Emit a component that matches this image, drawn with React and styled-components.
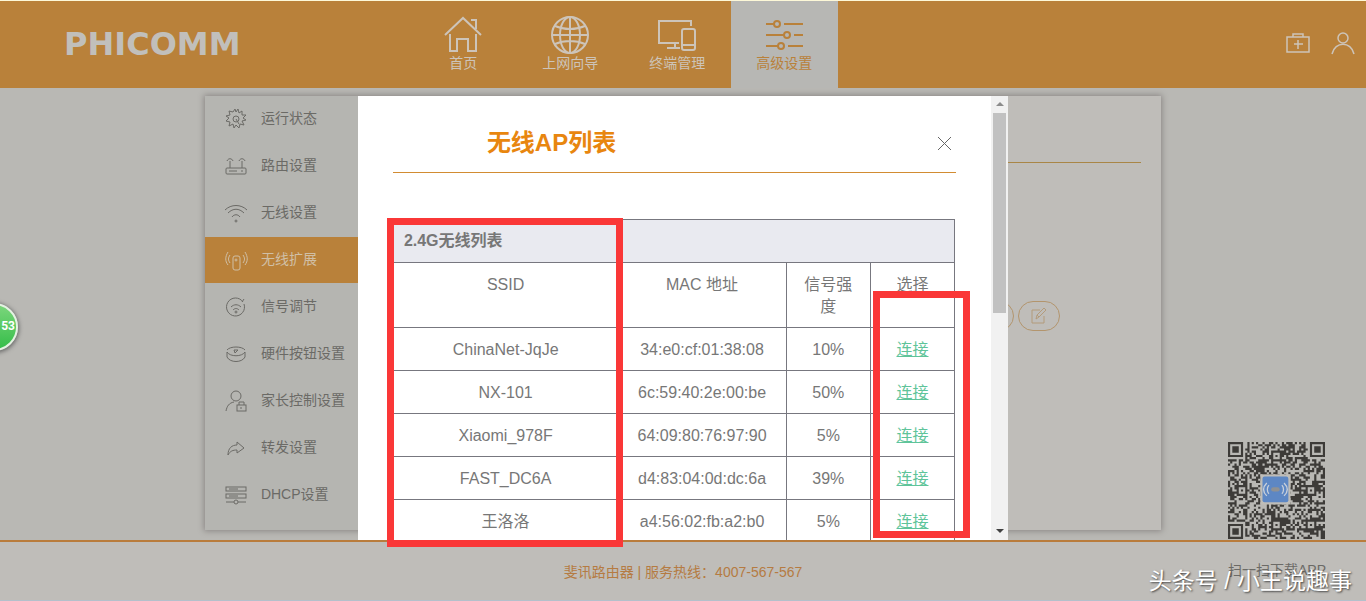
import styled, { createGlobalStyle } from "styled-components";

const menuItems = [
  { label: "运行状态", icon: "gear" },
  { label: "路由设置", icon: "router" },
  { label: "无线设置", icon: "wifi" },
  { label: "无线扩展", icon: "extender", active: true },
  { label: "信号调节", icon: "signal" },
  { label: "硬件按钮设置", icon: "button" },
  { label: "家长控制设置", icon: "parent" },
  { label: "转发设置", icon: "forward" },
  { label: "DHCP设置", icon: "dhcp" },
];

const accessPoints = [
  { ssid: "ChinaNet-JqJe", mac: "34:e0:cf:01:38:08", strength: "10%" },
  { ssid: "NX-101", mac: "6c:59:40:2e:00:be", strength: "50%" },
  { ssid: "Xiaomi_978F", mac: "64:09:80:76:97:90", strength: "5%" },
  { ssid: "FAST_DC6A", mac: "d4:83:04:0d:dc:6a", strength: "39%" },
  { ssid: "王洛洛", mac: "a4:56:02:fb:a2:b0", strength: "5%" },
];

const navItems = [
  {
    label: "首页",
    icon: <path d="M1 19 19 2l18 17M27 4h5v9M6 18v17h7V23h11v12h8V18" />,
  },
  {
    label: "上网向导",
    icon: (
      <>
        <circle cx="19" cy="19" r="18" />
        <ellipse cx="19" cy="19" rx="10" ry="18" />
        <path d="M19 1v36M1 19h36M4 10c9 4 21 4 30 0M4 28c9-4 21-4 30 0" />
      </>
    ),
  },
  {
    label: "终端管理",
    icon: (
      <>
        <path d="M33 10V5H1v22h20M17 27v4M9 32h13" />
        <rect x="24" y="13" width="13" height="21" rx="2" />
        <path d="M24 29h13" />
      </>
    ),
  },
  {
    label: "高级设置",
    active: true,
    icon: (
      <>
        <circle cx="12" cy="8" r="3" />
        <circle cx="22" cy="19" r="3" />
        <circle cx="16" cy="30" r="3" />
        <path d="M1 8h8M19 8h19M1 19h18M29 19h9M1 30h12M23 30h15" />
      </>
    ),
  },
];

const menuIcons = {
  gear: (
    <>
      <path d="m10 1 1 3 2-3 1 4 3-2v4h4l-3 3 3 2-4 1 2 4-4-1-1 4-3-3-2 3-1-4-4 2 1-4-4-1 3-3-3-2 4-1-1-4 4 1z" />
      <circle cx="11" cy="11" r="3" />
      <path d="m11 11 3 5" />
    </>
  ),
  router: (
    <>
      <rect x="1" y="13" width="20" height="6" rx="1" />
      <path d="M5 13V6M17 13V6M4 16h8M16 16h2M2 6c1-3 5-3 6 0M14 6c1-3 5-3 6 0" />
    </>
  ),
  wifi: (
    <>
      <path d="M0 8c6-6 16-6 22 0M3 11c5-5 11-5 16 0M7 15c2-3 6-3 8 0" />
      <circle cx="11" cy="19" r="1" />
    </>
  ),
  extender: (
    <>
      <rect x="8" y="7" width="7" height="14" rx="2" />
      <circle cx="11" cy="11" r="1" />
      <path d="M5 6c-2 3-2 5 0 8M3 3c-3 5-3 9 0 13M18 6c2 3 2 5 0 8M20 3c3 5 3 9 0 13" />
    </>
  ),
  signal: (
    <>
      <path d="M18 6a9 9 0 1 0 1 2M17 6l2-3M6 11c3-3 7-3 10 0M8 14c2-2 4-2 6 0" />
      <circle cx="11" cy="16" r="1" />
    </>
  ),
  button: (
    <path d="M2 7c3-4 15-4 18 0M2 9c3 5 15 5 18 0v5c-3 6-15 6-18 0zM9 7h4l-3 3z" />
  ),
  parent: (
    <>
      <circle cx="11" cy="6" r="5" />
      <path d="M1 21c1-5 3-8 8-9M14 15v-3h5v3" />
      <rect x="12" y="15" width="9" height="6" />
      <path d="M16 17v2" />
    </>
  ),
  forward: <path d="M3 18C3 11 7 8 12 8V5l7 6-7 5v-3c-4 0-7 1-9 5z" />,
  dhcp: (
    <>
      <rect x="1" y="3" width="20" height="4" />
      <rect x="1" y="10" width="20" height="4" />
      <path d="M4 5h9M4 12h9M1 18h8M13 18h8" />
      <circle cx="11" cy="18" r="2" />
    </>
  ),
};

const QR_SIZE = 45;
const FINDERS = [[0, 0], [38, 0], [0, 38]];
const ALIGNMENTS = [[22, 6], [6, 22], [38, 22], [22, 38], [38, 38]];

function ring(x, y, cx, cy) {
  return Math.max(Math.abs(x - cx), Math.abs(y - cy));
}

function buildQrPath() {
  let seed = 4007;
  let path = "";
  for (let y = 0; y < QR_SIZE; y++) {
    for (let x = 0; x < QR_SIZE; x++) {
      seed = (seed * 16807) % 2147483647;
      let dark = seed % 100 < 51;
      FINDERS.forEach(([fx, fy]) => {
        const d = ring(x, y, fx + 3, fy + 3);
        if (d <= 4) dark = d === 3 || d < 2;
      });
      ALIGNMENTS.forEach(([ax, ay]) => {
        const d = ring(x, y, ax, ay);
        if (d <= 2) dark = d !== 1;
      });
      if (dark) path += `M${x} ${y}h1v1h-1z`;
    }
  }
  return path;
}

const qrPath = buildQrPath();

export default function App() {
  return (
    <>
      <GlobalStyle />
      <StyledPage>
        <StyledHeader>
          <StyledLogo href="#">PHICOMM</StyledLogo>
          <StyledNav>
            {navItems.map((item) => (
              <StyledNavLink href="#" key={item.label} $active={item.active}>
                <StyledNavIcon viewBox="0 0 38 38">{item.icon}</StyledNavIcon>
                {item.label}
              </StyledNavLink>
            ))}
          </StyledNav>
          <StyledTools>
            <StyledToolButton aria-label="诊断">
              <svg width="24" height="24" viewBox="0 0 24 24">
                <path d="M1 5h22v15H1zM7 5V2h10v3M12 8v9M8 12h9" />
              </svg>
            </StyledToolButton>
            <StyledToolButton aria-label="账户">
              <svg width="24" height="24" viewBox="0 0 24 24">
                <circle cx="12" cy="6" r="5" />
                <path d="M1 22C4 9 20 9 23 22" />
              </svg>
            </StyledToolButton>
          </StyledTools>
        </StyledHeader>

        <StyledMain>
          <StyledPanel>
            <StyledSidebar>
              {menuItems.map((item) => (
                <StyledMenuLink href="#" key={item.label} $active={item.active}>
                  <StyledMenuIcon viewBox="0 -1 22 22">
                    {menuIcons[item.icon]}
                  </StyledMenuIcon>
                  {item.label}
                </StyledMenuLink>
              ))}
            </StyledSidebar>
            <StyledContent>
              <StyledContentLine />
              <StyledActions>
                <StyledPill aria-label="刷新" />
                <StyledPill aria-label="编辑">
                  <svg width="18" height="18" viewBox="0 0 18 18">
                    <path d="M10 3H2v13h12V9M6 12l1-4 7-7 2 2-7 7zM7 8l2 2" />
                  </svg>
                </StyledPill>
              </StyledActions>
            </StyledContent>

            <StyledDialog role="dialog" aria-label="无线AP列表">
              <StyledDialogBody>
                <StyledDialogHeader>
                  <StyledTitle>无线AP列表</StyledTitle>
                  <StyledClose aria-label="关闭">
                    <svg width="15" height="15" viewBox="0 0 15 15">
                      <path d="m1 1 13 13M14 1 1 14" />
                    </svg>
                  </StyledClose>
                </StyledDialogHeader>
                <StyledTable>
                  <colgroup>
                    <StyledCol $width="40%" />
                    <StyledCol $width="30%" />
                    <StyledCol $width="15%" />
                    <StyledCol $width="15%" />
                  </colgroup>
                  <thead>
                    <tr>
                      <StyledGroupCell colSpan={4}>2.4G无线列表</StyledGroupCell>
                    </tr>
                    <tr>
                      <StyledHeadCell>SSID</StyledHeadCell>
                      <StyledHeadCell>MAC 地址</StyledHeadCell>
                      <StyledHeadCell>信号强度</StyledHeadCell>
                      <StyledHeadCell>选择</StyledHeadCell>
                    </tr>
                  </thead>
                  <tbody>
                    {accessPoints.map((ap) => (
                      <tr key={ap.mac}>
                        <StyledCell>{ap.ssid}</StyledCell>
                        <StyledCell>{ap.mac}</StyledCell>
                        <StyledCell>{ap.strength}</StyledCell>
                        <StyledCell>
                          <StyledConnect href="#">连接</StyledConnect>
                        </StyledCell>
                      </tr>
                    ))}
                  </tbody>
                </StyledTable>
              </StyledDialogBody>
              <StyledScrollbar aria-hidden="true">
                <StyledArrow viewBox="0 0 17 17" $color="#8c8c8c">
                  <path d="M5 10h8L9 6z" />
                </StyledArrow>
                <StyledThumb />
                <StyledArrow viewBox="0 0 17 17" $color="#404040">
                  <path d="M5 6h8l-4 4z" />
                </StyledArrow>
              </StyledScrollbar>
              <StyledNameMark />
              <StyledConnectMark />
            </StyledDialog>
          </StyledPanel>
        </StyledMain>

        <StyledFooter>斐讯路由器 | 服务热线：4007-567-567</StyledFooter>

        <StyledDownload>
          <StyledQr viewBox="0 0 45 45">
            <path d={qrPath} fill="#3d3b38" />
            <rect x="15" y="15" width="14" height="14" fill="#bfbdb8" />
            <rect x="16" y="16" width="12" height="12" rx="1" fill="#5d87c4" />
            <path
              d="M19 20c-1 1-1 3 0 4M18 19c-2 2-2 4 0 6M25 20c1 1 1 3 0 4M26 19c2 2 2 4 0 6"
              fill="none"
              stroke="#c9d0da"
              strokeWidth="0.6"
            />
            <rect x="20" y="21" width="4" height="2" rx="1" fill="#8f9193" />
          </StyledQr>
          扫一扫下载APP
        </StyledDownload>
        <StyledWatermark>头条号 / 小王说趣事</StyledWatermark>
        <StyledBall>53</StyledBall>
      </StyledPage>
    </>
  );
}

const GlobalStyle = createGlobalStyle`
  * {
    box-sizing: border-box;
  }
  body {
    margin: 0;
    font-family: "Liberation Sans", "Noto Sans CJK SC", sans-serif;
    font-size: 14px;
    color: #6b6a66;
  }
  a {
    color: inherit;
    text-decoration: none;
  }
  button {
    padding: 0;
    border: 0;
    background: none;
    color: inherit;
  }
  svg {
    display: block;
    fill: none;
    stroke: currentColor;
  }
`;

const StyledPage = styled.div`
  position: relative;
  display: flex;
  flex-direction: column;
  min-height: 100vh;
  overflow: hidden;
  background: #b9b8b4;
`;

const StyledHeader = styled.header`
  display: grid;
  grid-template-columns: 30% auto 1fr;
  height: 88px;
  border-top: 1px solid #fdf8d8;
  background: #b9813a;
  color: #cdc4b9;
`;

const StyledLogo = styled.a`
  align-self: center;
  margin-left: 64px;
  padding-bottom: 2px;
  color: #c1bfbb;
  font: bold 32px/36px "DejaVu Sans", sans-serif;
`;

const StyledNav = styled.nav`
  display: flex;
`;

const StyledNavLink = styled.a`
  display: flex;
  flex-direction: column;
  align-items: center;
  width: 107px;
  padding-top: 15px;
  line-height: 18px;
  background: ${({ $active }) => ($active ? "#b7b7b4" : "transparent")};
  color: ${({ $active }) => ($active ? "#b9813a" : "inherit")};
`;

const StyledNavIcon = styled.svg`
  width: 38px;
  height: 38px;
  stroke-width: 2;
`;

const StyledTools = styled.div`
  display: flex;
  justify-content: flex-end;
  align-items: center;
  gap: 21px;
  padding: 0 11px 2px 0;
`;

const StyledToolButton = styled.button`
  svg {
    stroke-width: 1.5;
  }
`;

const StyledMain = styled.main`
  flex: 1;
  padding: 8px 15% 10px;
`;

const StyledPanel = styled.section`
  position: relative;
  display: flex;
  height: 100%;
  background: #bfbdb9;
  box-shadow: 0 0 6px 1px #8a8684;
`;

const StyledSidebar = styled.aside`
  display: flex;
  flex-direction: column;
  gap: 1px;
  width: 16%;
  padding-bottom: 12px;
  background: #b5b5b1;
`;

const StyledMenuLink = styled.a`
  display: flex;
  align-items: center;
  gap: 14px;
  height: 46px;
  padding: 0 0 2px 20px;
  line-height: 20px;
  white-space: nowrap;
  background: ${({ $active }) => ($active ? "#b9813a" : "transparent")};
  color: ${({ $active }) => ($active ? "#d0bfa5" : "inherit")};
`;

const StyledMenuIcon = styled.svg`
  flex: none;
  width: 22px;
  height: 22px;
  overflow: visible;
`;

const StyledContent = styled.div`
  flex: 1;
  padding: 0 20px;
`;

const StyledContentLine = styled.hr`
  height: 67px;
  margin: 0;
  border: 0;
  border-bottom: 1px solid #a98646;
`;

const StyledActions = styled.div`
  display: flex;
  justify-content: flex-end;
  gap: 4px;
  margin-top: 138px;
  padding-right: 81px;
`;

const StyledPill = styled.button`
  display: flex;
  justify-content: center;
  align-items: center;
  width: 42px;
  height: 30px;
  border: 1px solid #b3956d;
  border-radius: 15px;
  color: #b39b7b;
`;

const StyledDialog = styled.div`
  position: absolute;
  z-index: 1;
  top: 0;
  bottom: -10px;
  left: 16%;
  display: flex;
  width: 68%;
  background: #fff;
  color: #777;
`;

const StyledDialogBody = styled.div`
  flex: 1;
  overflow: hidden;
  padding: 0 35px;
`;

const StyledDialogHeader = styled.div`
  display: flex;
  justify-content: space-between;
  align-items: center;
  height: 77px;
  padding: 18px 4px 0 94px;
  border-bottom: 1px solid #d28c32;
`;

const StyledTitle = styled.h2`
  margin: 0;
  color: #e8860f;
  font-size: 24px;
  line-height: 30px;
`;

const StyledClose = styled.button`
  color: #666;
`;

const StyledTable = styled.table`
  width: calc(100% - 1px);
  margin-top: 46px;
  border-collapse: collapse;
  table-layout: fixed;
  font-size: 16px;
  line-height: 22px;
`;

const StyledCol = styled.col`
  width: ${({ $width }) => $width};
`;

const StyledCell = styled.td`
  padding: 11px 10px 9px;
  border: 1px solid #77777f;
  text-align: center;
  vertical-align: top;
`;

const StyledHeadCell = styled(StyledCell).attrs({ as: "th" })`
  font-weight: normal;
`;

const StyledGroupCell = styled(StyledCell).attrs({ as: "th" })`
  padding: 10px;
  background: #e9eaf0;
  text-align: left;
`;

const StyledConnect = styled.a`
  color: #5fc49a;
  text-decoration: underline;
`;

const StyledScrollbar = styled.div`
  display: flex;
  flex-direction: column;
  width: 17px;
  background: #f1f1f1;
`;

const StyledThumb = styled.div`
  width: 13px;
  height: 200px;
  margin: 0 auto auto;
  background: #c1c1c1;
`;

const StyledArrow = styled.svg`
  width: 17px;
  height: 17px;
  fill: ${({ $color }) => $color};
  stroke: none;
`;

const StyledMark = styled.div`
  position: absolute;
  border: 7px solid #fa3737;
  pointer-events: none;
`;

const StyledNameMark = styled(StyledMark)`
  top: 122px;
  bottom: -7px;
  left: 29px;
  width: 236px;
`;

const StyledConnectMark = styled(StyledMark)`
  top: 195px;
  right: 38px;
  bottom: 2px;
  width: 97px;
`;

const StyledFooter = styled.footer`
  height: 61px;
  padding-top: 20px;
  border-top: 2px solid #b97c3c;
  border-bottom: 1px solid #b4c0cb;
  background: #bfbdb9;
  color: #b57b42;
  line-height: 20px;
  text-align: center;
`;

const StyledDownload = styled.div`
  position: absolute;
  right: 40px;
  bottom: 21px;
  line-height: 20px;
`;

const StyledQr = styled.svg`
  width: 97px;
  height: 97px;
  margin-bottom: 21px;
  stroke: none;
`;

const StyledWatermark = styled.div`
  position: absolute;
  right: 14px;
  bottom: 5px;
  color: #fff;
  font-size: 23px;
  line-height: 30px;
  text-shadow: 1px 1px 2px #444;
`;

const StyledBall = styled.div`
  position: absolute;
  top: 303px;
  left: -30px;
  width: 48px;
  height: 48px;
  padding-right: 1px;
  border: 2px solid #e4f2e2;
  border-radius: 50%;
  background: linear-gradient(#7bd67c, #35bd49);
  box-shadow: 0 1px 4px 1px #666;
  color: #fff;
  font: bold 12px/42px Roboto, sans-serif;
  text-align: right;
`;
